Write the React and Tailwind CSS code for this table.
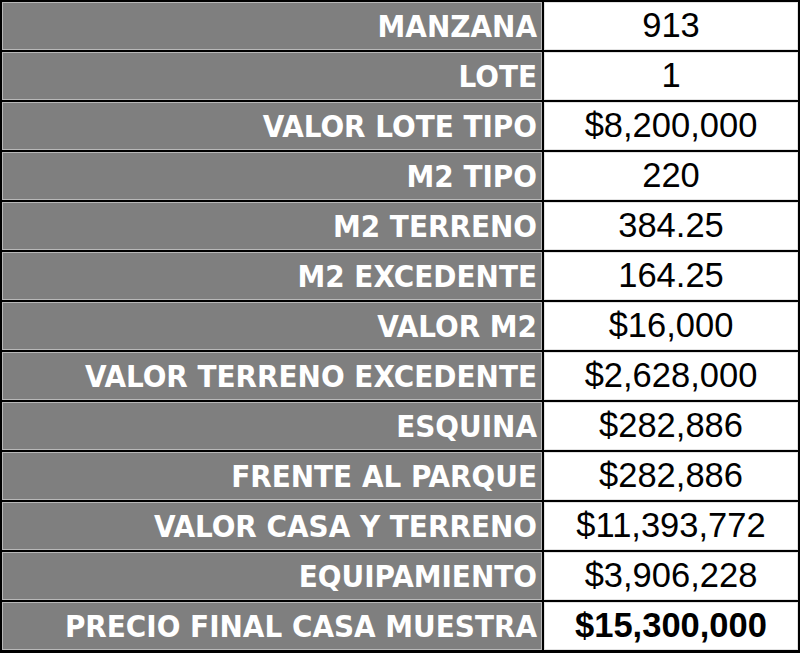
const rows = [
  ['MANZANA', '913'],
  ['LOTE', '1'],
  ['VALOR LOTE TIPO', '$8,200,000'],
  ['M2 TIPO', '220'],
  ['M2 TERRENO', '384.25'],
  ['M2 EXCEDENTE', '164.25'],
  ['VALOR M2', '$16,000'],
  ['VALOR TERRENO EXCEDENTE', '$2,628,000'],
  ['ESQUINA', '$282,886'],
  ['FRENTE AL PARQUE', '$282,886'],
  ['VALOR CASA Y TERRENO', '$11,393,772'],
  ['EQUIPAMIENTO', '$3,906,228'],
  ['PRECIO FINAL CASA MUESTRA', '$15,300,000', true],
];

export default function App() {
  return (
    <div className="h-[653px] w-[800px] bg-black p-[2px]">
      <div className="grid grid-cols-[540px_1fr] gap-[2px]">
        {rows.map(([label, value, bold]) => (
          <div key={label} className="contents">
            <div
              className="flex h-[48px] items-center justify-end border border-[#b8b8b8] bg-[#7f7f7f] pr-[4px] text-[31px] font-bold text-white font-stretch-condensed"
              style={{ fontFamily: '"DejaVu Sans Condensed", "DejaVu Sans", sans-serif' }}
            >
              {label}
            </div>
            <div
              className={`flex h-[48px] items-center justify-center border border-[#e2e2e2] bg-white text-[34.5px] text-black ${bold ? 'font-bold' : 'font-normal'}`}
              style={{ fontFamily: '"Liberation Sans", Arial, sans-serif' }}
            >
              {value}
            </div>
          </div>
        ))}
      </div>
    </div>
  );
}
